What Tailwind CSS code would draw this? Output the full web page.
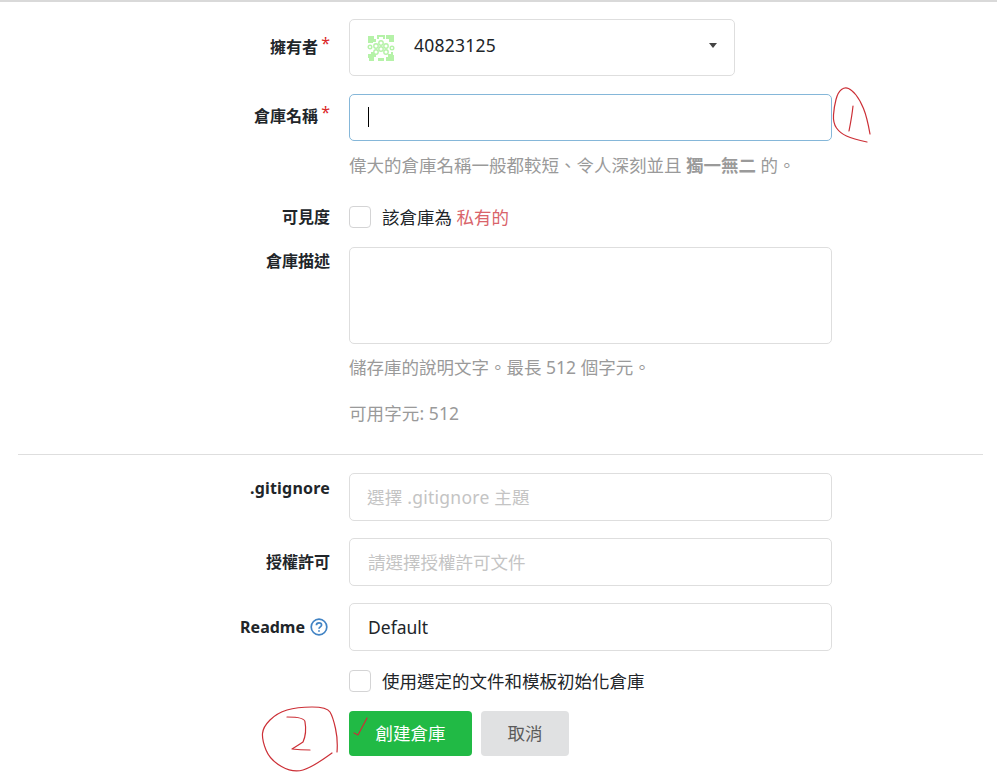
<!DOCTYPE html>
<html lang="zh-Hant">
<head>
    <meta charset="UTF-8">
    <meta name="viewport" content="width=device-width, initial-scale=1.0">
    <title>新增倉庫</title>
    <script src="https://cdn.jsdelivr.net/npm/@tailwindcss/browser@4"></script>
</head>
<body class="bg-white h-[776px] overflow-hidden relative font-['Noto_Sans','Noto_Sans_CJK_TC',sans-serif] text-[17.5px] text-[#212529]">
    <div class="h-[2px] bg-[#d9d9d9]"></div>

    <form class="pt-[17px]">
        <!-- 擁有者 -->
        <div class="flex items-start h-[57px] mb-[18px]">
            <label class="w-[330px] pt-[14px] pr-[12px] text-right text-[16px] leading-[28px] font-bold relative">擁有者<span class="absolute right-0 top-[10px] text-[#db2828] text-[16px] font-normal">*</span></label>
            <div class="ml-[19px] w-[386px] h-[57px] border border-[#dedede] rounded-[5px] flex items-center pl-[17px] pr-[17px]">
                <svg class="w-[28px] h-[28px] shrink-0" viewBox="0 0 28 28" fill="#b5f2a8">
                    <path d="M1 2h6v3h2v3H6v1H1zM10 1h8v4h-2v-2h-4v2h-2zM19 1h8v7h-5v-3h-3zM1 20h3v-2h3v2h2v3H7v4H2v-3H1zM19 23h2v-3h3v-2h2v3h1v6h-8zM11 24h6v3h-6z"/>
                    <circle cx="3" cy="13" r="1.8" fill="none" stroke="#b5f2a8" stroke-width="1.4"/>
                    <circle cx="9" cy="12" r="2.2" fill="none" stroke="#b5f2a8" stroke-width="1.4"/>
                    <circle cx="14" cy="9" r="2.2" fill="none" stroke="#b5f2a8" stroke-width="1.4"/>
                    <circle cx="19" cy="12" r="2.2" fill="none" stroke="#b5f2a8" stroke-width="1.4"/>
                    <circle cx="14" cy="15" r="2.2" fill="none" stroke="#b5f2a8" stroke-width="1.4"/>
                    <circle cx="9" cy="18" r="2.2" fill="none" stroke="#b5f2a8" stroke-width="1.4"/>
                    <circle cx="19" cy="18" r="2.2" fill="none" stroke="#b5f2a8" stroke-width="1.4"/>
                    <circle cx="25" cy="14" r="1.8" fill="none" stroke="#b5f2a8" stroke-width="1.4"/>
                </svg>
                <span class="ml-[19px] flex-1 pb-[4px] tracking-[0.25px]">40823125</span>
                <span class="w-0 h-0 border-x-[4.5px] border-x-transparent border-t-[5px] border-t-[#444] -mt-[5px]"></span>
            </div>
        </div>

        <!-- 倉庫名稱 -->
        <div class="flex items-start h-[47px]">
            <label class="w-[330px] pt-[8px] pr-[12px] text-right text-[16px] leading-[28px] font-bold relative">倉庫名稱<span class="absolute right-0 top-[4px] text-[#db2828] text-[16px] font-normal">*</span></label>
            <div class="ml-[19px] w-[483px] h-[47px] border border-[#85b7d9] rounded-[5px] flex items-center pl-[18px]">
                <span class="w-px h-[20px] bg-black -mt-[2px]"></span>
            </div>
        </div>
        <p class="ml-[349px] mt-[11px] h-[26px] leading-[26px] text-[#9a9a9a]">偉大的倉庫名稱一般都較短、令人深刻並且 <b class="font-bold">獨一無二</b> 的。</p>

        <!-- 可見度 -->
        <div class="flex items-center h-[22px] mt-[28px]">
            <label class="w-[330px] text-right text-[16px] font-bold">可見度</label>
            <span class="ml-[19px] w-[22px] h-[22px] border border-[#d4d4d5] rounded-[4px]"></span>
            <span class="ml-[11px]">該倉庫為 <span class="text-[#d9636a]">私有的</span></span>
        </div>

        <!-- 倉庫描述 -->
        <div class="flex items-start mt-[19px] h-[97px]">
            <label class="w-[330px] text-right text-[16px] leading-[28px] font-bold">倉庫描述</label>
            <div class="ml-[19px] w-[483px] h-[97px] border border-[#dedede] rounded-[5px]"></div>
        </div>
        <p class="ml-[349px] mt-[10px] h-[26px] leading-[26px] text-[#9a9a9a]">儲存庫的說明文字。最長 512 個字元。</p>
        <p class="ml-[349px] mt-[20px] h-[26px] leading-[26px] text-[#9a9a9a] tracking-[0.1px]">可用字元: 512</p>

        <div class="mx-[18px] mt-[28px] h-px w-[965px] bg-[#dedede]"></div>

        <!-- .gitignore -->
        <div class="flex items-start mt-[18px] h-[48px]">
            <label class="w-[330px] pt-[1px] text-right text-[16px] leading-[28px] font-bold tracking-[0.2px]">.gitignore</label>
            <div class="ml-[19px] w-[483px] h-[48px] border border-[#dedede] rounded-[5px] flex items-center pl-[17px] text-[#c4c4c4] tracking-[0.25px]">選擇 .gitignore 主題</div>
        </div>

        <!-- 授權許可 -->
        <div class="flex items-center mt-[17px] h-[48px]">
            <label class="w-[330px] text-right text-[16px] font-bold">授權許可</label>
            <div class="ml-[19px] w-[483px] h-[48px] border border-[#dedede] rounded-[5px] flex items-center pl-[18px] text-[#c4c4c4]">請選擇授權許可文件</div>
        </div>

        <!-- Readme -->
        <div class="flex items-center mt-[17px] h-[48px]">
            <label class="w-[330px] pr-[2px] flex items-center justify-end text-[16px] font-bold">Readme
                <svg class="ml-[5px] w-[18px] h-[18px]" viewBox="0 0 18 18" fill="none" stroke="#4183c4" stroke-width="1.7">
                    <circle cx="9" cy="9" r="7.8"/>
                    <path d="M6.4 7.2c0-1.6 1.2-2.4 2.6-2.4s2.6.9 2.6 2.2c0 1.9-2.6 1.9-2.6 3.8"/>
                    <path d="M9 12.2v1.6"/>
                </svg>
            </label>
            <div class="ml-[19px] w-[483px] h-[48px] border border-[#dedede] rounded-[5px] flex items-center pl-[18px]">Default</div>
        </div>

        <!-- 初始化 -->
        <div class="flex items-center ml-[349px] mt-[19px] h-[22px]">
            <span class="w-[22px] h-[22px] border border-[#d4d4d5] rounded-[4px]"></span>
            <span class="ml-[11px]">使用選定的文件和模板初始化倉庫</span>
        </div>

        <!-- 按鈕 -->
        <div class="flex ml-[349px] mt-[19px] gap-[9px]">
            <button type="button" class="w-[123px] h-[45px] rounded-[4px] bg-[#21ba45] text-white">創建倉庫</button>
            <button type="button" class="w-[88px] h-[45px] rounded-[4px] bg-[#e0e1e2] text-[#5a5a5a]">取消</button>
        </div>
    </form>

    <!-- 手寫紅色標註 -->
    <svg class="absolute inset-0 pointer-events-none" width="997" height="776" viewBox="0 0 997 776" fill="none" stroke="#cc2f36" stroke-width="1.2" stroke-linecap="round" stroke-linejoin="round">
        <path d="M870 134Q867 117 863.5 108.5Q860 100 856 95Q852 90 848.5 88.5Q845 87 841.5 89.5Q838 92 836 99.5Q834 107 833.5 115Q833 123 836.5 128Q840 133 846.5 136Q853 139 867 142"/>
        <path d="M853 106Q852 116 849 131"/>
        <path d="M354 733L358 735L367 718"/>
        <path d="M337 752Q338 740 335.5 728.5Q333 717 330 712Q327 707 312 707Q297 707 287 710Q277 713 270 720Q263 727 262.5 733.5Q262 740 266 750Q270 760 281.5 766.5Q293 773 303 770Q313 767 332 753"/>
        <path d="M287 717Q305 717 305 722Q307 733 303 742Q297 746 292 749Q300 750 310 750"/>
    </svg>
</body>
</html>
